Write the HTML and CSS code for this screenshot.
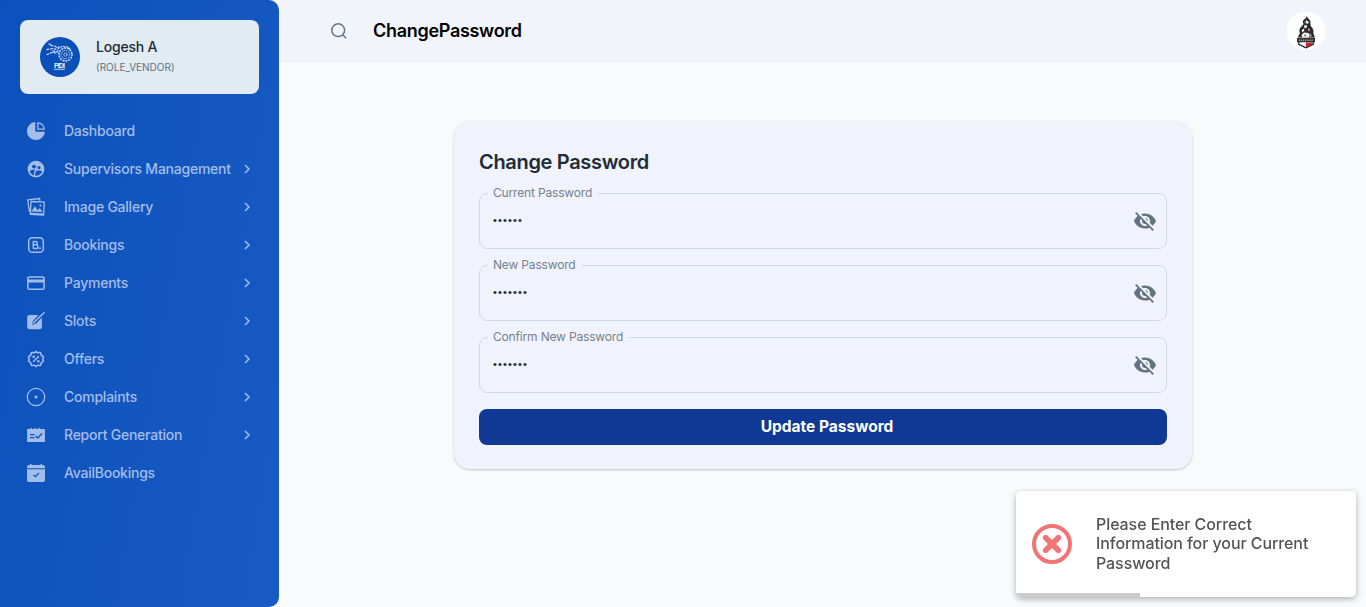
FILE: index.html
```html
<!DOCTYPE html>
<html lang="en">
<head>
<meta charset="utf-8">
<title>ChangePassword</title>
<link rel="stylesheet" href="styles.css">
</head>
<body>
<div class="app">
  <aside class="sidebar">
    <div class="account">
      <svg class="account-logo" viewBox="0 0 40 40">
        <circle cx="20" cy="20" r="20" fill="#0b4fb8"/>
        <g fill="none" stroke="#c5d6f1" stroke-linecap="round">
          <path d="M9 7l2 .8M11 8.500l4 .8 4 2M7 12.500l6-1 5 1.500M7 17.500l5-2 5 .5M13 14l5 1" stroke-width="1.300" stroke-dasharray="1.800 1.900"/>
          <circle cx="25.500" cy="17.500" r="6.500" stroke-width="1.600" stroke-dasharray=".8 2.100"/>
          <circle cx="25.500" cy="17.500" r="4.200" stroke-width=".9" stroke-dasharray="1 1.500"/>
          <circle cx="25.500" cy="17.500" r="1.700" stroke-width=".8"/>
          <path d="M18 10.500l5-1 5 .5 3 3" stroke-width="1.400" stroke-dasharray="1 1.900"/>
        </g>
        <text class="logo-name" x="14" y="30.500" textLength="11">PIDI</text>
        <path d="M14 32.300h11" stroke="#a9c0e6" stroke-width="1.200"/>
      </svg>
      <div class="account-text">
        <div class="account-name">Logesh A</div>
        <div class="account-role">(ROLE_VENDOR)</div>
      </div>
    </div>
    <nav class="menu">
      <a class="item"><svg class="icon" viewBox="0 0 20 20"><path fill="currentColor" d="M9.300 1.100a9 9 0 1 0 9.600 9.600H9.300z"/><path fill="none" stroke="currentColor" stroke-width="1.300" d="M11.900 1.800v6.300h6.400a6.500 6.500 0 0 0-6.400-6.300z"/></svg><span class="label">Dashboard</span></a>
      <a class="item"><svg class="icon" viewBox="0 0 24 24"><path fill="currentColor" d="M11.990 2c-5.520 0-10 4.480-10 10s4.480 10 10 10 10-4.480 10-10-4.480-10-10-10zm3.610 6.340c1.070 0 1.930.86 1.930 1.930 0 1.070-.86 1.930-1.930 1.930-1.070 0-1.930-.86-1.930-1.930-.01-1.070.86-1.930 1.930-1.930zm-6-1.580c1.300 0 2.360 1.060 2.360 2.360 0 1.300-1.060 2.360-2.360 2.360s-2.360-1.060-2.360-2.360c0-1.310 1.050-2.360 2.360-2.360zm0 9.130v3.750c-2.400-.75-4.300-2.600-5.140-4.960 1.050-1.120 3.670-1.690 5.140-1.690.53 0 1.200.08 1.900.22-1.640.87-1.900 2.020-1.900 2.680zM11.990 20c-.27 0-.53-.01-.79-.04v-4.070c0-1.420 2.940-2.130 4.400-2.130 1.070 0 2.920.39 3.840 1.150-1.170 2.970-4.060 5.090-7.450 5.090z"/></svg><span class="label">Supervisors Management</span><svg class="chevron" viewBox="0 0 16 16"><path d="M6 4l4 4-4 4"/></svg></a>
      <a class="item"><svg class="icon" viewBox="0 0 20 20"><g fill="none" stroke="currentColor" stroke-width="1.300" stroke-linejoin="round"><path d="M3.500 14.800L1.700 2.900l11.900-1.400.3 2.200"/><path d="M5 4.500l13.300.7-.7 13-13.200-.8z"/></g><path fill="currentColor" d="M5.600 14.500l3.200-5.200 3 4 2-2.400 2.700 4.200z"/><path fill="currentColor" d="M4.400 15.800l13.300.8-.1 1.600-13.200-.8z"/><circle cx="14.500" cy="8.500" r="1.100" fill="currentColor"/></svg><span class="label">Image Gallery</span><svg class="chevron" viewBox="0 0 16 16"><path d="M6 4l4 4-4 4"/></svg></a>
      <a class="item"><svg class="icon" viewBox="0 0 20 20"><g fill="none" stroke="currentColor" stroke-width="1.500"><rect x="2.700" y="2.700" width="14.600" height="14.600" rx="3.600"/><path d="M7.300 6v7.800M7.300 6.500h2.300a1.600 1.600 0 0 1 0 3.300H7.300M7.300 9.800h2.800a1.850 1.850 0 0 1 0 3.700H7.300"/></g><circle cx="14" cy="13.300" r="1" fill="currentColor"/></svg><span class="label">Bookings</span><svg class="chevron" viewBox="0 0 16 16"><path d="M6 4l4 4-4 4"/></svg></a>
      <a class="item"><svg class="icon" viewBox="0 0 20 20"><rect x="1.900" y="3.900" width="16.200" height="12.400" rx="1.300" fill="none" stroke="currentColor" stroke-width="1.500"/><path fill="currentColor" d="M2 6.500h16V9.500H2z"/></svg><span class="label">Payments</span><svg class="chevron" viewBox="0 0 16 16"><path d="M6 4l4 4-4 4"/></svg></a>
      <a class="item"><svg class="icon" viewBox="0 0 20 20"><path fill="currentColor" d="M3.500 4h8.900L7 10.100l-.7 3.600 3.600-1 6-6.300v9.600a2.300 2.300 0 0 1-2.300 2.300H3.500A2.300 2.300 0 0 1 1.200 16V6.300A2.300 2.300 0 0 1 3.500 4z"/><path fill="none" stroke="currentColor" stroke-width="1.500" stroke-linecap="round" d="M8 12l.6-1.400L17 2.700M17.700 2l.4-.4"/></svg><span class="label">Slots</span><svg class="chevron" viewBox="0 0 16 16"><path d="M6 4l4 4-4 4"/></svg></a>
      <a class="item"><svg class="icon" viewBox="0 0 24 24"><path fill="none" stroke="currentColor" stroke-width="1.900" stroke-linejoin="round" d="M12 2.900Q13.500 5 15.500 4.300Q17.700 3.600 17.900 6.100Q18 7.900 19.700 8.500Q21.700 9.300 20.500 11Q19.700 12 20.500 13Q21.700 14.700 19.700 15.500Q18 16.100 17.900 17.900Q17.700 20.400 15.500 19.700Q13.500 19 12 21.100Q10.500 19 8.500 19.700Q6.300 20.400 6.100 17.900Q6 16.100 4.300 15.500Q2.300 14.700 3.500 13Q4.300 12 3.500 11Q2.300 9.300 4.300 8.500Q6 7.900 6.100 6.100Q6.300 3.600 8.500 4.300Q10.500 5 12 2.900z"/><path stroke="currentColor" stroke-width="1.800" d="M8.600 15.400l6.800-6.800"/><circle cx="9.200" cy="9.200" r="1.500" fill="currentColor"/><circle cx="14.800" cy="14.800" r="1.500" fill="currentColor"/></svg><span class="label">Offers</span><svg class="chevron" viewBox="0 0 16 16"><path d="M6 4l4 4-4 4"/></svg></a>
      <a class="item"><svg class="icon" viewBox="0 0 20 20"><circle cx="10" cy="10" r="8.700" fill="none" stroke="currentColor" stroke-width="1.200"/><circle cx="10" cy="10" r="1.500" fill="currentColor"/></svg><span class="label">Complaints</span><svg class="chevron" viewBox="0 0 16 16"><path d="M6 4l4 4-4 4"/></svg></a>
      <a class="item"><svg class="icon" viewBox="0 0 20 20"><path fill="currentColor" fill-rule="evenodd" d="M1.100 4.100h3.200V3h1.500v1.100h2.500V3h1.500v1.100h2.500V3h1.500v1.100h5.100V17H1.100zM4 9v1.300h4.500V9zM4 12v1.300h4.500V12zM10 10.400l-.9 1 2.700 2.600 4.600-5-1-.9-3.600 3.900z"/></svg><span class="label">Report Generation</span><svg class="chevron" viewBox="0 0 16 16"><path d="M6 4l4 4-4 4"/></svg></a>
      <a class="item"><svg class="icon" viewBox="0 0 20 20"><path fill="currentColor" d="M3 1.900h1V1h1.500v.9h9V1H16v.9h1a2 2 0 0 1 2 2v1.300H1V3.900a2 2 0 0 1 2-2z"/><path fill="currentColor" fill-rule="evenodd" d="M1 6.200h18V17a2 2 0 0 1-2 2H3a2 2 0 0 1-2-2zM8 11.500l-.9.900 2.300 2.200 4-4.100-.9-.9-3.100 3.200z"/></svg><span class="label">AvailBookings</span></a>
    </nav>
  </aside>

  <div class="page">
    <header class="topbar">
      <svg class="search" viewBox="0 0 20 20"><circle cx="9.200" cy="9.200" r="6.400"/><path d="M14 14l3.200 3.200"/></svg>
      <h1 class="page-title">ChangePassword</h1>
      <svg class="avatar" viewBox="0 0 40 40">
        <circle cx="20" cy="20" r="19.300" fill="#fff"/>
        <path fill="#2b2b2b" d="M20.800 4.500c-.3 2-.8 2.700-2.400 3.800-1.900 1.400-2 3-.8 4.700l-2.800 3.200c-1.600 1.700-1.800 4-.9 6l-2.200 4.300h17.200l-1.500-4.300c.6-3-.8-5.500-2.600-7l-.4-3.200c.8-3.500-3-4-3.600-7.500z"/>
        <path fill="#f4f4f4" d="M20.300 9l2.600 2-.8 1.800-2.600-.6zM18 14.500l2.600-.5.600 2.200-2.700 1.200zM15.800 19l2-1.600.6 2-2.200 2zM22.300 17l1.700 1.700-1.500 1.600zM15.500 24l2.500-2.500 4.500.5 1.500 2.800-2 2h-5.500z"/>
        <path fill="#9b9b9b" d="M24 22l1.600 2-.5 2.200-1.700-1.500zM18.500 9.800l1.300 1.200-1 1zM18.500 23l2 .5-.5 2.500-2-.5z"/>
        <path fill="#d8202f" d="M22.800 20.500l1.800-1 .2 1.300zM20 31.500h6.300v1.800L20 36.300z"/>
        <path fill="#333" d="M11 27l18-.2v4.500H11z"/>
        <path fill="none" stroke="#222" stroke-width="1.300" d="M12.800 31v2.300L20 36.800l7.200-3.500V31"/>
        <path stroke="#ccc" stroke-width="1" stroke-dasharray="1.200 .7" d="M13 29.200h14"/>
      </svg>
    </header>
    <main class="content">
      <section class="card">
        <h2 class="card-title">Change Password</h2>
        <fieldset class="field"><legend class="legend"><span class="legend-text">Current Password</span></legend><span class="dots">••••••</span><svg class="eye" viewBox="0 0 24 24"><path d="M12 7c2.760 0 5 2.240 5 5 0 .65-.13 1.260-.36 1.830l2.920 2.920c1.510-1.260 2.700-2.890 3.430-4.750-1.730-4.390-6-7.500-11-7.500-1.400 0-2.740.25-3.980.7l2.160 2.160C10.740 7.130 11.350 7 12 7zM2 4.270l2.280 2.280.46.46C3.080 8.300 1.780 10.020 1 12c1.730 4.390 6 7.500 11 7.500 1.550 0 3.030-.3 4.380-.84l.42.42L19.730 22 21 20.730 3.270 3 2 4.270zM7.530 9.800l1.550 1.550c-.05.21-.08.43-.08.65 0 1.660 1.340 3 3 3 .22 0 .44-.03.65-.08l1.550 1.550c-.67.33-1.410.53-2.200.53-2.760 0-5-2.240-5-5 0-.79.2-1.530.53-2.200zm4.310-.78l3.150 3.150.02-.16c0-1.660-1.340-3-3-3l-.17.01z"/></svg></fieldset>
        <fieldset class="field"><legend class="legend"><span class="legend-text">New Password</span></legend><span class="dots">•••••••</span><svg class="eye" viewBox="0 0 24 24"><path d="M12 7c2.760 0 5 2.240 5 5 0 .65-.13 1.260-.36 1.830l2.920 2.920c1.510-1.260 2.700-2.890 3.430-4.750-1.730-4.390-6-7.500-11-7.500-1.400 0-2.740.25-3.980.7l2.160 2.160C10.740 7.130 11.350 7 12 7zM2 4.270l2.280 2.280.46.46C3.080 8.300 1.780 10.020 1 12c1.730 4.390 6 7.500 11 7.500 1.550 0 3.030-.3 4.380-.84l.42.42L19.730 22 21 20.730 3.270 3 2 4.270zM7.530 9.800l1.550 1.550c-.05.21-.08.43-.08.65 0 1.660 1.340 3 3 3 .22 0 .44-.03.65-.08l1.550 1.550c-.67.33-1.410.53-2.200.53-2.760 0-5-2.240-5-5 0-.79.2-1.530.53-2.200zm4.310-.78l3.150 3.150.02-.16c0-1.660-1.340-3-3-3l-.17.01z"/></svg></fieldset>
        <fieldset class="field"><legend class="legend"><span class="legend-text">Confirm New Password</span></legend><span class="dots">•••••••</span><svg class="eye" viewBox="0 0 24 24"><path d="M12 7c2.760 0 5 2.240 5 5 0 .65-.13 1.260-.36 1.830l2.920 2.920c1.510-1.260 2.700-2.890 3.430-4.750-1.730-4.390-6-7.500-11-7.500-1.400 0-2.740.25-3.980.7l2.160 2.160C10.740 7.130 11.350 7 12 7zM2 4.270l2.280 2.280.46.46C3.080 8.300 1.780 10.020 1 12c1.730 4.390 6 7.500 11 7.500 1.550 0 3.030-.3 4.380-.84l.42.42L19.730 22 21 20.730 3.270 3 2 4.270zM7.530 9.800l1.550 1.550c-.05.21-.08.43-.08.65 0 1.660 1.340 3 3 3 .22 0 .44-.03.65-.08l1.550 1.550c-.67.33-1.410.53-2.200.53-2.760 0-5-2.240-5-5 0-.79.2-1.530.53-2.200zm4.310-.78l3.150 3.150.02-.16c0-1.660-1.340-3-3-3l-.17.01z"/></svg></fieldset>
        <button class="submit">Update Password</button>
      </section>
    </main>
  </div>
</div>

<div class="toast">
  <svg class="toast-icon" viewBox="0 0 40 40"><circle cx="20" cy="20" r="18"/><path class="cross" d="M13.700 13.700l12.600 12.600M26.300 13.700L13.700 26.300"/></svg>
  <div class="toast-text">Please Enter Correct<br>Information for your Current<br>Password</div>
  <div class="toast-progress"></div>
</div>
</body>
</html>
```

FILE: styles.css
```css
* { box-sizing: border-box; }
body {
  margin: 0;
  height: 607px;
  overflow: hidden;
  background: #f9fafc;
  color: #212b36;
  font-family: Inter, "Liberation Sans", sans-serif;
}
.app { display: flex; height: 607px; }

.sidebar {
  width: 279px;
  padding: 20px 20px 0;
  border-radius: 0 10px 10px 0;
  background: linear-gradient(100deg, #0c51bb, #185ac4);
}
.account {
  display: flex;
  align-items: center;
  gap: 16px;
  height: 74px;
  padding: 0 20px;
  border-radius: 8px;
  background: #e2eaf2;
}
.account-logo { width: 40px; height: 40px; }
.account-text { padding-bottom: 2px; }
.logo-name { font: 700 7px "Liberation Sans", sans-serif; fill: #e8f0fb; }
.account-name { font-size: 14px; font-weight: 500; line-height: 20px; letter-spacing: -0.2px; }
.account-role { margin-top: 2px; font-size: 10px; line-height: 17px; letter-spacing: 0; color: #637381; }

.menu { display: flex; flex-direction: column; margin: 18px 0 0 6px; }
.item {
  display: flex;
  align-items: center;
  height: 38px;
  color: #a3bde9;
}
.icon { width: 20px; height: 20px; margin-right: 18px; }
.label { flex: 1; padding-bottom: 2px; font-size: 14px; font-weight: 500; letter-spacing: -0.24px; white-space: nowrap; }
.chevron { width: 16px; height: 16px; margin-right: 4px; fill: none; stroke: currentColor; stroke-width: 1.500; }

.page { flex: 1; display: flex; flex-direction: column; }
.topbar {
  display: flex;
  align-items: center;
  height: 62px;
  padding: 0 40px 0 50px;
  background: #f1f4fa;
}
.search { width: 20px; height: 20px; fill: none; stroke: #637381; stroke-width: 1.500; }
.page-title { flex: 1; margin: 0 0 0 24px; padding-bottom: 2px; font-size: 18px; font-weight: 600; color: #000; letter-spacing: -0.3px; }
.avatar { width: 40px; height: 40px; }

.content { padding: 60px 0 0 175px; }
.card {
  width: 738px;
  height: 347px;
  padding: 27px 25px 0;
  border-radius: 16px;
  background: #f0f3fb;
  box-shadow: 0 1px 2px rgba(90, 105, 125, .3), 0 0 4px rgba(145, 158, 171, .12);
}
.card-title { margin: 0 0 10px; font-size: 20px; line-height: 26px; font-weight: 600; letter-spacing: -0.33px; }
.field {
  display: flex;
  align-items: center;
  justify-content: space-between;
  height: 64px;
  margin: 0 0 8px;
  padding: 0 9px 8px 8px;
  border: 1px solid #d3d9e2;
  border-radius: 8px;
}
.legend { height: 17px; padding: 0 5px; }
.legend-text { display: block; font-size: 12px; line-height: 15px; letter-spacing: -0.17px; color: #75818e; }
.dots { padding: 0 0 2px 5px; font: 11px "Liberation Sans", sans-serif; letter-spacing: 1.150px; }
.eye { width: 24px; height: 24px; fill: #637381; }
.submit {
  display: block;
  width: 100%;
  height: 36px;
  margin-top: 16px;
  padding: 0 0 2px 8px;
  border: 0;
  border-radius: 8px;
  background: #103996;
  color: #fff;
  font: 700 15.500px Inter, sans-serif;
}

.toast {
  position: fixed;
  right: 10px;
  bottom: 10px;
  display: flex;
  align-items: center;
  gap: 24px;
  width: 340px;
  height: 106px;
  padding: 0 16px;
  overflow: hidden;
  border-radius: 5px;
  background: #fff;
  box-shadow: 0 2px 6px rgba(0, 0, 0, .3);
}
.toast-icon { width: 40px; height: 40px; fill: none; stroke: #f27474; stroke-width: 4; }
.cross { stroke-width: 5.600; stroke-linecap: round; }
.toast-text { font-size: 16px; line-height: 19.600px; font-weight: 500; letter-spacing: -0.080px; color: #545454; white-space: nowrap; }
.toast-progress { position: absolute; left: 0; bottom: 0; width: 124px; height: 4px; background: #cbcbcb; }
```
